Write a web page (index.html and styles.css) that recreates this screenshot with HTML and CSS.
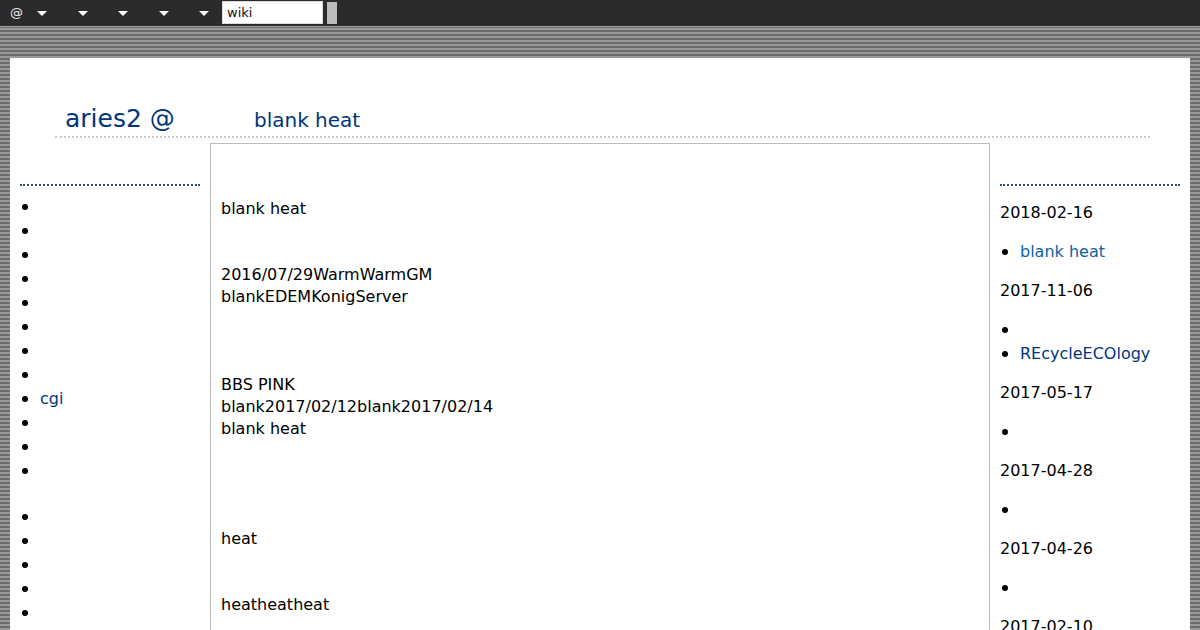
FILE: index.html
```html
<!DOCTYPE html>
<html lang="ja">
<head>
<meta charset="utf-8">
<title>aries2 @ blank heat</title>
<link rel="stylesheet" href="styles.css">
</head>
<body>
<nav class="topbar">
  <span class="at">@</span>
  <span class="caret caret-first"></span>
  <span class="caret"></span>
  <span class="caret"></span>
  <span class="caret"></span>
  <span class="caret"></span>
  <input class="search" type="text" value="wiki">
  <span class="go"></span>
</nav>
<div class="page">
  <header class="head">
    <h1 class="site">aries2 @</h1>
    <h2 class="pagetitle">blank heat</h2>
  </header>
  <div class="cols">
    <aside class="side side-left">
      <ul class="list">
        <li></li><li></li><li></li><li></li><li></li><li></li><li></li><li></li>
        <li><a class="link" href="#">cgi</a></li>
        <li></li><li></li><li></li>
      </ul>
      <ul class="list list-next">
        <li></li><li></li><li></li><li></li><li></li>
      </ul>
    </aside>
    <main class="body">
      <p class="para first">blank heat</p>
      <p class="para gap44">2016/07/29WarmWarmGM<br>blankEDEMKonigServer</p>
      <p class="para gap66">BBS PINK<br>blank2017/02/12blank2017/02/14<br>blank heat</p>
      <p class="para gap88">heat</p>
      <p class="para gap44">heatheatheat</p>
    </main>
    <aside class="side side-right">
      <p class="date">2018-02-16</p>
      <ul class="list"><li><a class="link link-new" href="#">blank heat</a></li></ul>
      <p class="date">2017-11-06</p>
      <ul class="list"><li></li><li><a class="link" href="#">REcycleECOlogy</a></li></ul>
      <p class="date">2017-05-17</p>
      <ul class="list"><li></li></ul>
      <p class="date">2017-04-28</p>
      <ul class="list"><li></li></ul>
      <p class="date">2017-04-26</p>
      <ul class="list"><li></li></ul>
      <p class="date">2017-02-10</p>
    </aside>
  </div>
</div>
</body>
</html>
```
FILE: styles.css
```css
html, body {
  margin: 0;
  padding: 0;
  height: 630px;
  overflow: hidden;
}
body {
  font-family: "DejaVu Sans", sans-serif;
  font-size: 16px;
  color: #000;
  background: repeating-linear-gradient(to bottom, #999 0, #999 2px, #6b6b6b 2px, #6b6b6b 4px);
}
.topbar {
  display: flex;
  align-items: flex-start;
  height: 27px;
  padding-left: 10px;
  background: #2b2b2b;
  border-bottom: 1px solid #a0a0a0;
  box-sizing: border-box;
}
.at {
  width: 27px;
  font-size: 13px;
  line-height: 26px;
  color: #eee;
}
.caret {
  width: 0;
  height: 0;
  margin-top: 11px;
  margin-left: 30.5px;
  border-left: 5px solid transparent;
  border-right: 5px solid transparent;
  border-top: 5px solid #fff;
}
.caret-first { margin-left: 0; }
.search {
  width: 101px;
  height: 23px;
  margin: 1px 0 0 13px;
  padding: 0 4px;
  box-sizing: border-box;
  border: 1px solid #ddd;
  background: #fff;
  font-family: "DejaVu Sans", sans-serif;
  font-size: 13px;
  color: #111;
  border-radius: 0;
  outline: none;
}
.go {
  width: 10px;
  height: 22px;
  margin: 2px 0 0 4px;
  background: #bbb;
}
.page {
  margin: 31px 10px 0;
  padding: 0 10px;
  background: #fff;
  height: 572px;
  overflow: hidden;
}
.head {
  display: flex;
  align-items: baseline;
  margin: 0 30px 0 35px;
  padding: 46px 0 3px 10px;
  border-bottom: 2px dotted #ccc;
}
.site {
  width: 189px;
  margin: 0;
  font-size: 25px;
  font-weight: normal;
  color: #003580;
}
.pagetitle {
  margin: 0;
  font-size: 20px;
  font-weight: normal;
  color: #003580;
}
.cols {
  display: flex;
  gap: 10px;
  align-items: flex-start;
  margin-top: 5px;
}
.side {
  flex: 0 0 180px;
  margin-top: 41px;
  border-top: 2px dotted #2f4f78;
}
.body {
  flex: 1;
  height: 600px;
  border: 1px solid #bbb;
  border-bottom: none;
  padding: 54px 10px 0;
  box-sizing: border-box;
}
.para {
  margin: 0;
  line-height: 22px;
}
.gap44 { margin-top: 44px; }
.gap66 { margin-top: 66px; }
.gap88 { margin-top: 88px; }
.list {
  margin: 0;
  padding: 0 0 0 20px;
  line-height: 24px;
  list-style: none;
}
.list li {
  position: relative;
  height: 24px;
}
.list li::before {
  content: "";
  position: absolute;
  left: -18px;
  top: 9px;
  width: 6px;
  height: 6px;
  border-radius: 50%;
  background: #000;
}
.side-left .list { margin-top: 9px; }
.side-left .list-next { margin-top: 22px; }
.link {
  color: #003580;
  text-decoration: none;
}
.link-new { color: #0b62a8; }
.date {
  margin: 15px 0;
  line-height: 24px;
}
```
